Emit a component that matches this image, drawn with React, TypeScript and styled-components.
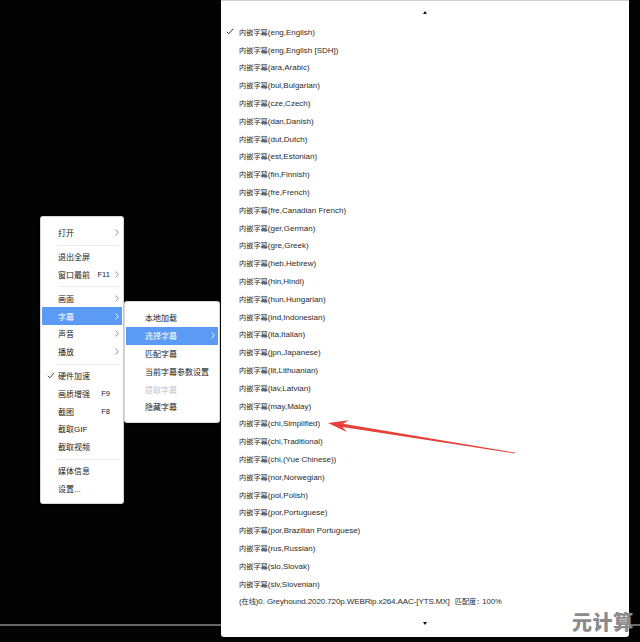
import React from 'react'
import styled, { createGlobalStyle } from 'styled-components'

const GlobalStyle = createGlobalStyle`
  html, body {
    margin: 0;
    padding: 0;
    background: #000;
  }
  body {
    font-family: "Liberation Sans", "Noto Sans CJK SC", sans-serif;
  }
`

const Stage = styled.div`
  position: relative;
  width: 640px;
  height: 642px;
  overflow: hidden;
  background: #030303;
  display: flex;
  flex-direction: column;
  justify-content: flex-end;
`

const ProgressLine = styled.div`
  height: 2px;
  margin-bottom: 16px;
  background: #676767;
`

const Menu = styled.div<{ $left: number; $top: number; $width: number }>`
  position: absolute;
  left: ${(p) => p.$left}px;
  top: ${(p) => p.$top}px;
  width: ${(p) => p.$width}px;
  padding: 7px 1px 6px;
  background: #fff;
  border-radius: 2px;
  box-shadow: 0 0 0 1px #d8d8d8, 0 1px 3px rgba(0, 0, 0, 0.4);
  font-size: 8px;
  color: #222;
  box-sizing: border-box;
`

const MenuItem = styled.div<{ $active?: boolean; $disabled?: boolean; $indent: number }>`
  display: grid;
  grid-template-columns: ${(p) => p.$indent}px 1fr auto 10px;
  align-items: center;
  height: 17.8px;
  background: ${(p) => (p.$active ? '#5c9bf5' : 'transparent')};
  color: ${(p) => (p.$active ? '#fff' : p.$disabled ? '#c4c4c4' : '#222')};
  white-space: nowrap;
`

const CheckCell = styled.span`
  display: flex;
  justify-content: center;
  padding-left: 2px;
`

const Shortcut = styled.span`
  font-size: 7.6px;
  padding-right: 2px;
`

const ChevronCell = styled.span`
  display: flex;
  justify-content: center;
`

const Separator = styled.div`
  height: 1px;
  margin: 3px 3px 2px 16px;
  background: #ececec;
`

const TrackPanel = styled.div`
  position: absolute;
  left: 221px;
  top: 0;
  width: 408px;
  height: 637px;
  background: #fff;
  border-top: 1px solid #cfcfcf;
  border-radius: 0 0 3px 3px;
  box-sizing: border-box;
  display: flex;
  flex-direction: column;
  font-size: 8px;
  color: #2b2b2b;
`

const ScrollZone = styled.div<{ $grow?: boolean }>`
  height: 22px;
  flex: ${(p) => (p.$grow ? 1 : 'none')};
  display: flex;
  align-items: center;
  justify-content: center;
`

const Triangle = styled.span<{ $down?: boolean }>`
  width: 0;
  height: 0;
  border-left: 2.5px solid transparent;
  border-right: 2.5px solid transparent;
  ${(p) =>
    p.$down ? 'border-top: 3px solid #111;' : 'border-bottom: 3px solid #111;'}
`

const TrackRow = styled.div`
  display: grid;
  grid-template-columns: 18px 1fr;
  align-items: center;
  height: 17.8px;
  white-space: nowrap;
`

const TrackCheck = styled.span`
  display: flex;
  padding-left: 5px;
`

const Cjk = styled.span`
  font-size: 7.2px;
`

const SourceName = styled.span`
  letter-spacing: -0.1px;
`

const MatchScore = styled.span`
  margin-left: 5px;
  font-size: 7.6px;
`

const Colon = styled.span`
  display: inline-block;
  width: 6px;
  font-size: 7px;
`

const Annotation = styled.svg`
  position: absolute;
  left: 0;
  top: 0;
  pointer-events: none;
`

const Watermark = styled.div`
  position: absolute;
  left: 572px;
  top: 611px;
  font-family: "Noto Sans CJK SC", sans-serif;
  font-weight: 900;
  font-size: 20px;
  line-height: 22px;
  letter-spacing: 0.5px;
  color: #8b8b8b;
  text-shadow: 0 0 1px rgba(255, 255, 255, 0.6);
`

const Check = ({ color = '#333' }: { color?: string }) => (
  <svg width="8" height="7" viewBox="0 0 8 7">
    <polyline points="0.8,3.8 2.8,5.8 7.2,0.8" fill="none" stroke={color} strokeWidth="1" />
  </svg>
)

const Chevron = ({ color = '#8a8a8a' }: { color?: string }) => (
  <svg width="4" height="7" viewBox="0 0 4 7">
    <polyline points="0.5,0.5 3.3,3.5 0.5,6.5" fill="none" stroke={color} strokeWidth="0.9" />
  </svg>
)

type Entry =
  | { sep: true }
  | { label: string; sub?: boolean; key?: string; checked?: boolean; active?: boolean; disabled?: boolean }

const mainMenu: Entry[] = [
  { label: '打开', sub: true },
  { sep: true },
  { label: '退出全屏' },
  { label: '窗口最前', key: 'F11', sub: true },
  { sep: true },
  { label: '画面', sub: true },
  { label: '字幕', sub: true, active: true },
  { label: '声音', sub: true },
  { label: '播放', sub: true },
  { sep: true },
  { label: '硬件加速', checked: true },
  { label: '画质增强', key: 'F9' },
  { label: '截图', key: 'F8' },
  { label: '截取GIF' },
  { label: '截取视频' },
  { sep: true },
  { label: '媒体信息' },
  { label: '设置...' },
]

const subtitleMenu: Entry[] = [
  { label: '本地加载' },
  { label: '选择字幕', sub: true, active: true },
  { label: '匹配字幕' },
  { label: '当前字幕参数设置' },
  { label: '提取字幕', disabled: true },
  { label: '隐藏字幕' },
]

const tracks = [
  'eng,English',
  'eng,English [SDH]',
  'ara,Arabic',
  'bul,Bulgarian',
  'cze,Czech',
  'dan,Danish',
  'dut,Dutch',
  'est,Estonian',
  'fin,Finnish',
  'fre,French',
  'fre,Canadian French',
  'ger,German',
  'gre,Greek',
  'heb,Hebrew',
  'hin,Hindi',
  'hun,Hungarian',
  'ind,Indonesian',
  'ita,Italian',
  'jpn,Japanese',
  'lit,Lithuanian',
  'lav,Latvian',
  'may,Malay',
  'chi,Simplified',
  'chi,Traditional',
  'chi,(Yue Chinese)',
  'nor,Norwegian',
  'pol,Polish',
  'por,Portuguese',
  'por,Brazilian Portuguese',
  'rus,Russian',
  'slo,Slovak',
  'slv,Slovenian',
]

const MenuList = ({ items, indent }: { items: Entry[]; indent: number }) => (
  <>
    {items.map((item, i) =>
      'sep' in item ? (
        <Separator key={i} />
      ) : (
        <MenuItem key={i} $indent={indent} $active={item.active} $disabled={item.disabled}>
          <CheckCell>{item.checked && <Check color="#444" />}</CheckCell>
          <span>{item.label}</span>
          <Shortcut>{item.key}</Shortcut>
          <ChevronCell>{item.sub && <Chevron color={item.active ? '#fff' : '#8a8a8a'} />}</ChevronCell>
        </MenuItem>
      )
    )}
  </>
)

export default function App() {
  return (
    <>
      <GlobalStyle />
      <Stage>
        <ProgressLine />

        <Menu $left={41} $top={217} $width={82}>
          <MenuList items={mainMenu} indent={16} />
        </Menu>

        <Menu $left={125} $top={302} $width={94}>
          <MenuList items={subtitleMenu} indent={19} />
        </Menu>

        <TrackPanel>
          <ScrollZone>
            <Triangle />
          </ScrollZone>
          {tracks.map((t, i) => (
            <TrackRow key={t}>
              <TrackCheck>{i === 0 && <Check />}</TrackCheck>
              <span>
                <Cjk>内嵌字幕</Cjk>({t})
              </span>
            </TrackRow>
          ))}
          <TrackRow>
            <span />
            <span>
              <SourceName>
                (<Cjk>在线</Cjk>)0. Greyhound.2020.720p.WEBRip.x264.AAC-[YTS.MX]
              </SourceName>
              <MatchScore>
                <Cjk>匹配度</Cjk>
                <Colon>：</Colon>
                100%
              </MatchScore>
            </span>
          </TrackRow>
          <ScrollZone $grow>
            <Triangle $down />
          </ScrollZone>
        </TrackPanel>

        <Annotation width="640" height="642" viewBox="0 0 640 642">
          <polygon
            fill="#e8403a"
            points="328,423 348.7,420.3 343.1,423.8 515.1,452.6 514.9,453.4 342.5,427 346.8,432.1"
          />
        </Annotation>

        <Watermark>元计算</Watermark>
      </Stage>
    </>
  )
}
